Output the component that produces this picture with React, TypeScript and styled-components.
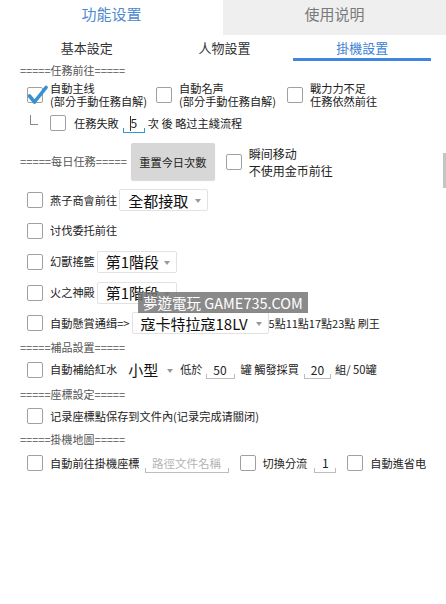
import * as React from 'react'
import styled, { createGlobalStyle } from 'styled-components';

const Global = createGlobalStyle`
  html, body { margin: 0; padding: 0; background: #fff; }
  body { font-family: "Noto Sans CJK TC", "Noto Sans CJK SC", "Noto Sans", sans-serif; }
`;

const Page = styled.div`
  position: relative;
  width: 446px;
  height: 604px;
  overflow: hidden;
  background: #fff;
  color: #222;
`;

const TabBar = styled.div`
  display: flex;
  height: 35px;
`;

const Tab = styled.div<{ $active?: boolean }>`
  flex: 1;
  display: flex;
  align-items: center;
  justify-content: center;
  padding-bottom: 9px;
  font-size: 15px;
  background: ${p => p.$active ? '#fff' : '#efefef'};
  color: ${p => p.$active ? '#4f8ad0' : '#7a7a7a'};
`;

const SubTabs = styled.div`
  display: flex;
  height: 26px;
  padding: 0 15px 0 18px;
`;

const SubTab = styled.div<{ $active?: boolean }>`
  flex: 1;
  display: flex;
  align-items: center;
  justify-content: center;
  padding-top: 2px;
  font-size: 13px;
  color: ${p => p.$active ? '#3b82d6' : '#333'};
  border-bottom: 3px solid ${p => p.$active ? '#3f86e0' : 'transparent'};
`;

const Body = styled.div`
  display: flex;
  flex-direction: column;
`;

const Title = styled.div<{ $mt?: number }>`
  height: 14px;
  line-height: 14px;
  margin-top: ${p => p.$mt ?? 0}px;
  padding-left: 20px;
  font-size: 11px;
  color: #555;
  white-space: nowrap;
`;

const Row = styled.div<{ $h: number; $mt?: number; $indent?: number }>`
  display: flex;
  align-items: center;
  height: ${p => p.$h}px;
  margin-top: ${p => p.$mt ?? 0}px;
  padding-left: ${p => p.$indent ?? 27}px;
  white-space: nowrap;
`;

const Option = styled.div<{ $w?: number; $ml?: number }>`
  display: flex;
  align-items: center;
  gap: 7px;
  width: ${p => p.$w ? `${p.$w}px` : 'auto'};
  margin-left: ${p => p.$ml ?? 0}px;
  flex: none;
`;

const Label = styled.span<{ $ml?: number; $size?: number; $muted?: boolean }>`
  font-size: ${p => p.$size ?? 11.2}px;
  color: ${p => p.$muted ? '#555' : '#222'};
  margin-left: ${p => p.$ml ?? 0}px;
  line-height: 13px;
`;

const Box = styled.span`
  position: relative;
  width: 16px;
  height: 16px;
  box-sizing: border-box;
  border: 1px solid #a0a0a0;
  border-radius: 2px;
  background: #fff;
  flex: none;
  svg { position: absolute; left: -1px; top: -4px; }
`;

const Corner = styled.span`
  width: 7px;
  height: 9px;
  margin-top: -6px;
  margin-right: 12px;
  border-left: 1px solid #888;
  border-bottom: 1px solid #888;
  flex: none;
`;

const Field = styled.span<{ $w: number; $focus?: boolean; $ml?: number; $place?: boolean }>`
  position: relative;
  display: inline-flex;
  align-items: center;
  justify-content: center;
  width: ${p => p.$w}px;
  height: 19px;
  margin-left: ${p => p.$ml ?? 0}px;
  box-sizing: border-box;
  border-bottom: 1px solid ${p => p.$focus ? '#2b9bd1' : '#bdbdbd'};
  font-size: ${p => p.$place ? 11.5 : 12}px;
  color: ${p => p.$place ? '#b4b4b4' : '#222'};
  flex: none;
  &::before, &::after {
    content: '';
    position: absolute;
    bottom: 0;
    width: 1px;
    height: 4px;
    background: ${p => p.$focus ? '#2b9bd1' : '#bdbdbd'};
  }
  &::before { left: 0; }
  &::after { right: 0; }
`;

const Caret = styled.span`
  position: absolute;
  left: 7px;
  top: 2px;
  width: 1px;
  height: 15px;
  background: #333;
`;

const Select = styled.span<{ $w: number; $ml?: number; $plain?: boolean }>`
  position: relative;
  display: inline-flex;
  align-items: center;
  width: ${p => p.$w}px;
  height: 22px;
  margin-left: ${p => p.$ml ?? 0}px;
  box-sizing: border-box;
  padding-left: 8px;
  border: 1px solid ${p => p.$plain ? 'transparent' : '#e2e2e2'};
  border-radius: 2px;
  font-size: 15px;
  color: #111;
  flex: none;
  &::after {
    content: '';
    position: absolute;
    right: 6px;
    top: 9px;
    border-left: 3.5px solid transparent;
    border-right: 3.5px solid transparent;
    border-top: 4px solid #999;
  }
`;

const ResetButton = styled.div`
  display: flex;
  align-items: center;
  justify-content: center;
  width: 84px;
  height: 37px;
  margin-left: 4px;
  background: #d7d7d7;
  border-radius: 2px;
  box-shadow: 0 1px 1px rgba(0,0,0,0.15);
  font-size: 11.2px;
  color: #222;
  flex: none;
`;

const TwoLine = styled.div<{ $size?: number }>`
  display: flex;
  flex-direction: column;
  font-size: ${p => p.$size ?? 11.2}px;
  line-height: ${p => p.$size ? 17 : 13}px;
  color: #222;
`;

const Watermark = styled.div`
  position: absolute;
  left: 138px;
  top: 292px;
  width: 170px;
  height: 21px;
  display: flex;
  align-items: center;
  justify-content: center;
  background: rgba(118,118,118,0.85);
  color: #fff;
  font-size: 14.5px;
  white-space: nowrap;
`;

const ScrollThumb = styled.div`
  position: absolute;
  right: 0;
  top: 153px;
  width: 3px;
  height: 35px;
  background: #c4c4c4;
`;

const Check = ({ checked }: { checked?: boolean }) => (
  <Box>
    {checked && (
      <svg width="22" height="22" viewBox="0 0 22 22">
        <path d="M2.5 12 L7.5 18 L19 3.5" fill="none" stroke="#3a8fd0" strokeWidth="3.6" strokeLinecap="round" strokeLinejoin="round" />
      </svg>
    )}
  </Box>
);

const App = () => {
  return (
    <Page>
      <Global />
      <TabBar>
        <Tab $active>功能设置</Tab>
        <Tab>使用说明</Tab>
      </TabBar>
      <SubTabs>
        <SubTab>基本設定</SubTab>
        <SubTab>人物設置</SubTab>
        <SubTab $active>掛機設置</SubTab>
      </SubTabs>
      <Body>
        <Title $mt={2}>=====任務前往=====</Title>
        <Row $h={27} $mt={4}>
          <Option $w={129}>
            <Check checked />
            <TwoLine><span>自動主线</span><span>(部分手動任務自解)</span></TwoLine>
          </Option>
          <Option $w={131}>
            <Check />
            <TwoLine><span>自動名声</span><span>(部分手動任務自解)</span></TwoLine>
          </Option>
          <Option>
            <Check />
            <TwoLine><span>戰力力不足</span><span>任務依然前往</span></TwoLine>
          </Option>
        </Row>
        <Row $h={20} $mt={5} $indent={30}>
          <Corner />
          <Check />
          <Label $ml={8}>任務失敗</Label>
          <Field $w={22} $ml={4} $focus><Caret />5</Field>
          <Label $ml={3}>次 後 略过主綫流程</Label>
        </Row>
        <Row $h={37} $mt={10} $indent={20}>
          <Label $muted>=====每日任務=====</Label>
          <ResetButton>重置今日次數</ResetButton>
          <Option $ml={11}>
            <Check />
            <TwoLine $size={12}><span>瞬间移动</span><span>不使用金币前往</span></TwoLine>
          </Option>
        </Row>
        <Row $h={30} $mt={5}>
          <Option><Check /><Label>燕子商會前往</Label></Option>
          <Select $w={89} $ml={2}>全都接取</Select>
        </Row>
        <Row $h={31}>
          <Option><Check /><Label>讨伐委托前往</Label></Option>
        </Row>
        <Row $h={31}>
          <Option><Check /><Label>幻獸搖籃</Label></Option>
          <Select $w={80} $ml={2}>第1階段</Select>
        </Row>
        <Row $h={31}>
          <Option><Check /><Label>火之神殿</Label></Option>
          <Select $w={80} $ml={2}>第1階段</Select>
        </Row>
        <Row $h={30}>
          <Option><Check /><Label>自動懸賞通缉=&gt;</Label></Option>
          <Select $w={137} $ml={2}>寇卡特拉寇18LV</Select>
          <Label $size={11}>5點11點17點23點 刷王</Label>
        </Row>
        <Title $mt={2}>=====補品設置=====</Title>
        <Row $h={31}>
          <Option><Check /><Label>自動補給紅水</Label></Option>
          <Select $w={61} $ml={2} $plain>小型</Select>
          <Label>低於</Label>
          <Field $w={29} $ml={3}>50</Field>
          <Label $ml={6}>罐 觸發採買</Label>
          <Field $w={27} $ml={5}>20</Field>
          <Label $ml={4}>組/ 50罐</Label>
        </Row>
        <Title $mt={2}>=====座標設定=====</Title>
        <Row $h={30}>
          <Option><Check /><Label>记录座標點保存到文件內(记录完成请關闭)</Label></Option>
        </Row>
        <Title $mt={1}>=====掛機地圖=====</Title>
        <Row $h={30} $mt={2}>
          <Option><Check /><Label>自動前往掛機座標</Label></Option>
          <Field $w={84} $ml={5} $place>路徑文件名稱</Field>
          <Option $ml={11}><Check /><Label>切換分流</Label></Option>
          <Field $w={22} $ml={7}>1</Field>
          <Option $ml={11}><Check /><Label>自動進省电</Label></Option>
        </Row>
      </Body>
      <Watermark>夢遊電玩 GAME735.COM</Watermark>
      <ScrollThumb />
    </Page>
  );
};

export default App;
